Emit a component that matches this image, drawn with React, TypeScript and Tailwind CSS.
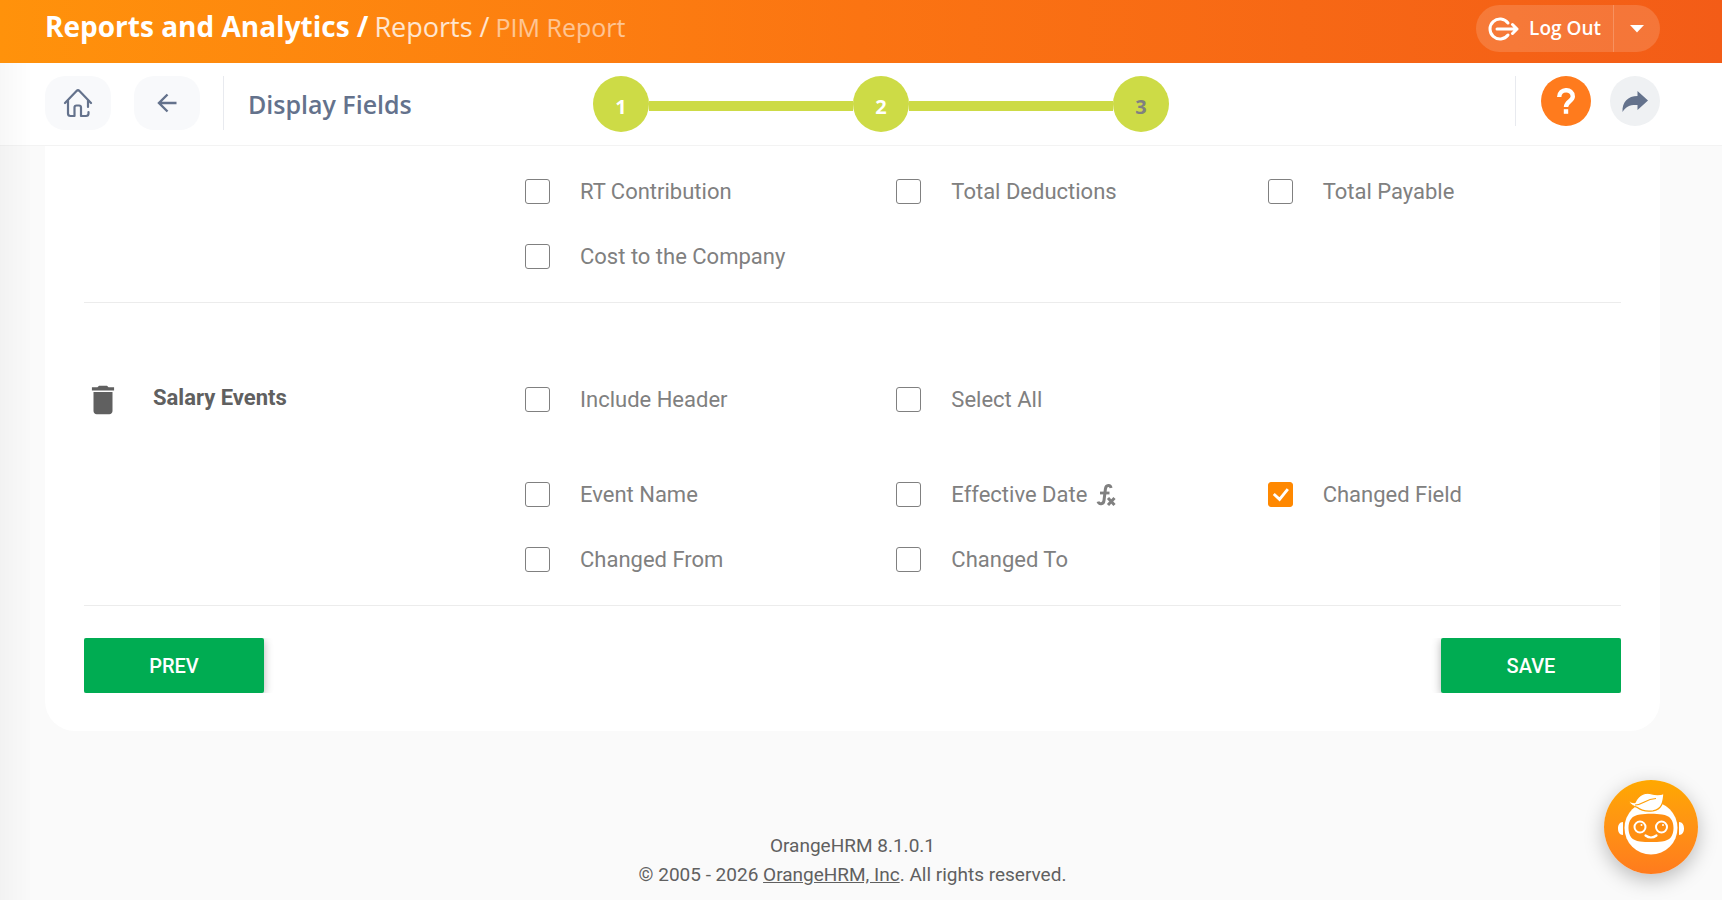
import React from 'react';
import { MdDelete } from 'react-icons/md';

interface Field {
  id: string;
  label: string;
  checked?: boolean;
  formula?: boolean;
}

const contributionFields: Field[] = [
  { id: 'rt-contribution', label: 'RT Contribution' },
  { id: 'total-deductions', label: 'Total Deductions' },
  { id: 'total-payable', label: 'Total Payable' },
  { id: 'cost-to-company', label: 'Cost to the Company' },
];

const groupOptions: Field[] = [
  { id: 'include-header', label: 'Include Header' },
  { id: 'select-all', label: 'Select All' },
];

const salaryFields: Field[] = [
  { id: 'event-name', label: 'Event Name' },
  { id: 'effective-date', label: 'Effective Date', formula: true },
  { id: 'changed-field', label: 'Changed Field', checked: true },
  { id: 'changed-from', label: 'Changed From' },
  { id: 'changed-to', label: 'Changed To' },
];

const FormulaIcon = () => (
  <svg className="w-6 h-6" viewBox="0 0 24 24" fill="none" stroke="currentColor">
    <path d="M16 5C15.600 1.600 11 1.200 10.400 6L9 17.500C8.600 21.500 4 21.600 3 18.600" strokeWidth="3" />
    <path d="M5 10h9.500" strokeWidth="2.800" />
    <path d="M13 15l6.500 7M19.500 15L13 22" strokeWidth="3" />
  </svg>
);

const FieldOption: React.FC<{ field: Field }> = ({ field }) => (
  <div className="flex h-[25px] items-start">
    <span className="relative w-[25px] h-[25px] shrink-0">
      <input
        id={field.id}
        type="checkbox"
        defaultChecked={field.checked}
        className="peer block w-full h-full appearance-none rounded-[3px] border border-[#808080] bg-white checked:border-[#ff8800] checked:bg-[#ff8800]"
      />
      <svg className="absolute inset-0 w-full h-full text-white pointer-events-none opacity-0 peer-checked:opacity-100" viewBox="0 0 26 26" fill="none" stroke="currentColor" strokeWidth="3">
        <path d="M6 12.500l6 5.500L20.600 7.400" />
      </svg>
    </span>
    <label htmlFor={field.id} className="ml-[30px] flex items-center gap-2 text-[22px] leading-[26px] text-[#808080]">
      {field.label}
      {field.formula && <FormulaIcon />}
    </label>
  </div>
);

const FieldGrid: React.FC<{ fields: Field[] }> = ({ fields }) => (
  <div className="grid grid-cols-3 gap-y-10">
    {fields.map((field) => (
      <FieldOption key={field.id} field={field} />
    ))}
  </div>
);

const BotIcon = () => (
  <svg className="w-full h-full" viewBox="0 0 94 94" fill="none">
    <path d="M19 42c-3.500 0-5 3-5 6.500s1.500 6.500 5 6.500zM75 42c3.500 0 5 3 5 6.500s-1.500 6.500-5 6.500z" fill="#fff" />
    <circle cx="47" cy="48" r="26.500" fill="#fff" />
    <path d="M36 34.500C42 33.500 52 33.500 58 34.500C66 35.500 69.500 40 69.500 48C69.500 56 66 60.500 58 61.500C52 62.300 42 62.300 36 61.500C28 60.500 24.500 56 24.500 48C24.500 40 28 35.500 36 34.500Z" fill="#ff8f12" />
    <circle cx="36" cy="47" r="5.500" stroke="#fff" strokeWidth="2" />
    <circle cx="57.500" cy="47" r="5.500" stroke="#fff" strokeWidth="2" />
    <circle cx="37.500" cy="45" r="1" fill="#fff" />
    <circle cx="59" cy="45" r="1" fill="#fff" />
    <path d="M41.500 55.500q5.500 4 11 0" stroke="#fff" strokeWidth="2.200" strokeLinecap="round" />
    <path d="M24.500 21.500c3 0 4 1.500 6.500 1C35 14 42 12 48 14c4 1 8 1 12-.5C59 21 59 29 49 30.800c-7 1-12-.3-16-3.500-3-1-6-1.800-8.500-5.800z" fill="#fff" stroke="#ffa009" strokeWidth="1.200" />
    <path d="M31 25c8 0 10-6 21-6.500" stroke="#ffa009" strokeWidth="1.200" />
  </svg>
);

const TopBar = () => (
  <header className="flex h-[63px] items-start justify-between bg-linear-to-r from-[#ff920b] via-[#fb7412] to-[#f35c17] pl-[45px] pr-[62px] pt-[5px] font-[Open_Sans,sans-serif] text-white">
    <nav className="flex items-baseline gap-[6px] leading-[42px]">
      <h1 className="text-[28px] font-bold">Reports and Analytics /</h1>
      <a href="#reports" className="text-[27px] text-white/80">Reports /</a>
      <span className="text-[25px] text-white/55">PIM Report</span>
    </nav>
    <div className="flex h-[47px] overflow-hidden rounded-full bg-white/15">
      <button className="flex items-center gap-[10px] border-r border-white/20 pl-3 pr-3 text-[19px] font-semibold">
        <svg className="w-[31px] h-6" viewBox="0 0 31 24" fill="none" stroke="currentColor" strokeWidth="3" strokeLinecap="round" strokeLinejoin="round">
          <path d="M20 6A10 10 0 1 0 20 18" />
          <path d="M9 12h20M24.500 7.500L29 12l-4.500 4.500" />
        </svg>
        Log Out
      </button>
      <button aria-label="More" className="flex w-[46px] items-center justify-center">
        <svg className="w-[14px] h-[8px]" viewBox="0 0 14 8" fill="currentColor">
          <path d="M0 0h14L7 7.500z" />
        </svg>
      </button>
    </div>
  </header>
);

const Stepper = () => (
  <ol className="flex items-center font-[Open_Sans,sans-serif] text-[20px] font-bold text-white">
    <li className="flex size-14 items-center justify-center rounded-full bg-[#cddb46] pt-[6px]">1</li>
    <li aria-hidden="true" className="mt-1 h-[10px] w-[204px] bg-[#cddb46]" />
    <li className="flex size-14 items-center justify-center rounded-full bg-[#cddb46] pt-[6px]">2</li>
    <li aria-hidden="true" className="mt-1 h-[10px] w-[204px] bg-[#cddb46]" />
    <li className="flex size-14 items-center justify-center rounded-full bg-[#cddb46] pt-[6px] text-[#808080]">3</li>
  </ol>
);

const ToolBar = () => (
  <div className="flex h-[83px] items-start border-b border-[#f3f3f3] pl-[45px] pr-[62px] pt-[13px]">
    <div className="flex w-[548px] items-center">
      <button aria-label="Home" className="flex h-[54px] w-[66px] items-center justify-center rounded-[20px] bg-[#f8f9fb] text-[#64728c]">
        <svg className="w-[30px] h-[30px]" viewBox="0 0 30 30" fill="none" stroke="currentColor" strokeWidth="2.200" strokeLinecap="round" strokeLinejoin="round">
          <path d="M2 15L13.500 3q1.500-1.500 3 0L28 15" />
          <path d="M5 12.500v13q0 2.500 2.500 2.500h4v-8.500q0-2 2-2h2.500q2 0 2 2v8.500H23q2.500 0 2.500-2.500v-1.500M25 12.500v6.500" />
        </svg>
      </button>
      <button aria-label="Back" className="ml-[23px] flex h-[54px] w-[66px] items-center justify-center rounded-[20px] bg-[#f8f9fb] text-[#64728c]">
        <svg className="w-5 h-5" viewBox="0 0 20 20" fill="none" stroke="currentColor" strokeWidth="2.400">
          <path d="M19.500 10H2.500M10.500 1.500L2 10l8.500 8.500" />
        </svg>
      </button>
      <div className="ml-[23px] h-[54px] w-px bg-[#e8eaef]" />
      <h2 className="ml-6 mt-1 font-[Open_Sans,sans-serif] text-[25px] font-semibold text-[#64728c]">Display Fields</h2>
    </div>
    <Stepper />
    <div className="ml-auto flex items-center">
      <div className="h-[50px] w-px bg-[#e8eaef]" />
      <button aria-label="Help" className="ml-[25px] flex size-[50px] items-center justify-center rounded-full bg-[#ff7b1d] text-white">
        <svg className="w-[18px] h-[26px]" viewBox="0 0 18 26" fill="none" stroke="currentColor" strokeWidth="4.400">
          <path d="M2.200 9C2.200 0 15.800 0 15.800 8.500C15.800 13 9 13.500 9 19" />
          <path d="M9 21.200v4.600" />
        </svg>
      </button>
      <button aria-label="Share" className="ml-[19px] flex size-[50px] items-center justify-center rounded-full bg-[#eff1f3] text-[#64728c]">
        <svg className="w-[26px] h-[21px]" viewBox="0 0 26 21" fill="currentColor">
          <path d="M15.500 0L26 9.500 15.500 19v-5C9 13.500 4 15 .5 21 0 11 6 5 15.500 5z" />
        </svg>
      </button>
    </div>
  </div>
);

export default function App() {
  return (
    <div className="min-h-screen bg-[#fafafa] font-[Roboto,sans-serif]">
      <TopBar />
      <div className="bg-white">
        <ToolBar />
      </div>

      <main className="ml-[45px] mr-[62px] rounded-b-[30px] bg-white px-[39px] pb-[38px] pt-[33px]">
        <section className="border-b border-[#ececec] pb-[33px]">
          <div className="ml-[441px] -mr-[18px]">
            <FieldGrid fields={contributionFields} />
          </div>
        </section>

        <section className="flex border-b border-[#ececec] pb-[33px] pt-[84px]">
          <div className="flex h-[25px] w-[441px] shrink-0 items-center">
            <button aria-label="Remove Salary Events" className="text-[#606060]">
              <MdDelete className="w-[38px] h-[38px]" />
            </button>
            <h3 className="ml-[31px] pb-1 text-[22px] font-bold text-[#606060]">Salary Events</h3>
          </div>
          <div className="-mr-[18px] flex flex-1 flex-col gap-[70px]">
            <FieldGrid fields={groupOptions} />
            <FieldGrid fields={salaryFields} />
          </div>
        </section>

        <div className="mt-8 flex justify-between overflow-hidden text-[20px] font-medium text-white">
          <button className="h-[55px] w-[180px] rounded-[2px] bg-[#00ac52] shadow-[0_2px_10px_rgba(0,0,0,0.3)]">PREV</button>
          <button className="h-[55px] w-[180px] rounded-[2px] bg-[#00ac52] shadow-[0_2px_10px_rgba(0,0,0,0.3)]">SAVE</button>
        </div>
      </main>

      <footer className="ml-[45px] mr-[62px] pt-[100px] text-center text-[19px] leading-[29px] text-[#606060]">
        <p>OrangeHRM 8.1.0.1</p>
        <p>
          © 2005 - 2026 <a href="#orangehrm" className="underline">OrangeHRM, Inc</a>. All rights reserved.
        </p>
      </footer>

      <div className="pointer-events-none fixed bottom-0 left-0 top-[63px] w-8 bg-linear-to-r from-black/3 to-transparent" />
      <button aria-label="Assistant" className="fixed bottom-[26px] right-6 size-[94px] rounded-full bg-linear-to-b from-[#ffa800] to-[#ff7b1d] shadow-[0_6px_20px_rgba(0,0,0,0.25)]">
        <BotIcon />
      </button>
    </div>
  );
}
